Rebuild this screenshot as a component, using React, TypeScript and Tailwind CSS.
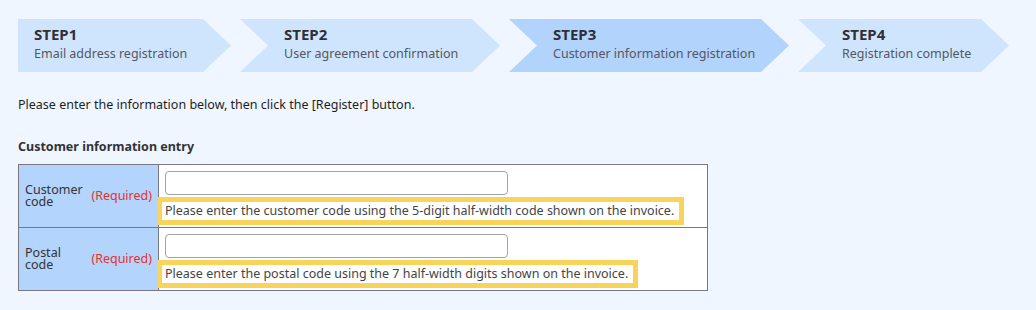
import React from "react";

const steps = [
  { no: "STEP1", label: "Email address registration", width: "w-[213px]", first: true, active: false },
  { no: "STEP2", label: "User agreement confirmation", width: "w-[260px]", first: false, active: false },
  { no: "STEP3", label: "Customer information registration", width: "w-[280px]", first: false, active: true },
  { no: "STEP4", label: "Registration complete", width: "w-[211px]", first: false, active: false },
];

const fields = [
  {
    name: "Customer code",
    hint: "Please enter the customer code using the 5-digit half-width code shown on the invoice.",
  },
  {
    name: "Postal code",
    hint: "Please enter the postal code using the 7 half-width digits shown on the invoice.",
  },
];

function Step({ no, label, width, first, active }: (typeof steps)[number]) {
  return (
    <div
      className={[
        "h-[53px] shrink-0 pt-[4px]",
        width,
        active ? "bg-[#b1d3fc]" : "bg-[#cfe5fd]",
        first
          ? "pl-[16px] [clip-path:polygon(0_0,calc(100%-28px)_0,100%_50%,calc(100%-28px)_100%,0_100%)]"
          : "pl-[44px] [clip-path:polygon(0_0,calc(100%-28px)_0,100%_50%,calc(100%-28px)_100%,0_100%,28px_50%)]",
      ].join(" ")}
    >
      <div className="text-[15px] leading-[22px] font-bold text-[#2f3033]">{no}</div>
      <div className="text-[12.5px] leading-[18px] text-[#55575c] whitespace-nowrap">{label}</div>
    </div>
  );
}

export default function App() {
  return (
    <div
      className="min-h-[310px] w-[1036px] bg-[#eff6ff] px-[18px] pt-[19px] text-[#333]"
      style={{ fontFamily: '"Noto Sans", "Noto Sans CJK JP", sans-serif' }}
    >
      {/* Step indicator */}
      <div className="flex gap-[9px]">
        {steps.map((s) => (
          <Step key={s.no} {...s} />
        ))}
      </div>

      <p className="mt-[24px] text-[12.5px] leading-[17px] text-[#1e1e1e]">
        Please enter the information below, then click the [Register] button.
      </p>

      <h2 className="mt-[25px] mb-[8px] text-[12.5px] leading-[18px] font-bold text-[#333]">
        Customer information entry
      </h2>

      {/* Entry table */}
      <div className="w-[690px] border border-[#78787e] bg-white">
        {fields.map((f, i) => (
          <div key={f.name} className={"flex h-[62px] " + (i === 0 ? "border-b border-[#78787e] h-[63px]" : "")}>
            <div className="flex w-[140px] shrink-0 items-center justify-between border-r border-[#78787e] bg-[#b3d4fc] pl-[6px] pr-[6px]">
              <span className="w-[62px] text-[12.5px] leading-[12px] text-[#333]">{f.name}</span>
              <span className="text-[12.5px] text-[#e8312a]">(Required)</span>
            </div>
            <div className="flex flex-col items-start pl-[6px] pt-[6px]">
              <input
                type="text"
                className="h-[24px] w-[343px] rounded-[4px] border border-[#a2a2aa] bg-white px-2 text-[12px] outline-none"
              />
              <div className="-ml-[8px] mt-[2px] border-[5px] border-[#f8d45a] bg-white pl-[3px] pr-[5px] text-[12.5px] leading-[18px] text-[#444] whitespace-nowrap">
                {f.hint}
              </div>
            </div>
          </div>
        ))}
      </div>
    </div>
  );
}
